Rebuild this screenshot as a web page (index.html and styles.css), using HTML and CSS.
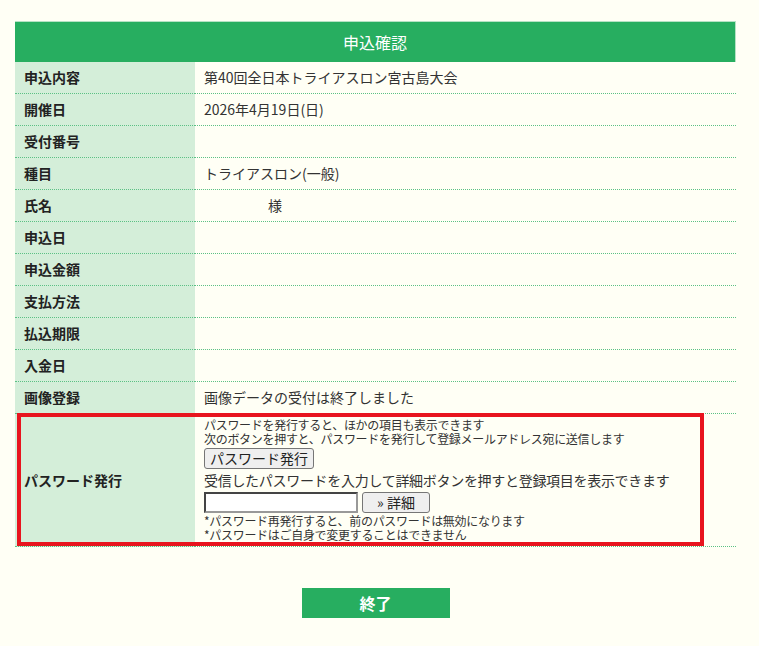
FILE: index.html
```html
<!DOCTYPE html>
<html lang="ja">
<head>
<meta charset="utf-8">
<title>申込確認</title>
<link rel="stylesheet" href="styles.css">
</head>
<body>
<div class="page">
  <table class="confirm">
    <colgroup><col class="col-label"><col class="col-value"></colgroup>
    <thead>
      <tr><th colspan="2" class="head">申込確認</th></tr>
    </thead>
    <tbody>
      <tr><th>申込内容</th><td>第40回全日本トライアスロン宮古島大会</td></tr>
      <tr><th>開催日</th><td>2026年4月19日(日)</td></tr>
      <tr><th>受付番号</th><td></td></tr>
      <tr><th>種目</th><td>トライアスロン(一般)</td></tr>
      <tr><th>氏名</th><td><span class="name">様</span></td></tr>
      <tr><th>申込日</th><td></td></tr>
      <tr><th>申込金額</th><td></td></tr>
      <tr><th>支払方法</th><td></td></tr>
      <tr><th>払込期限</th><td></td></tr>
      <tr><th>入金日</th><td></td></tr>
      <tr><th>画像登録</th><td>画像データの受付は終了しました</td></tr>
      <tr class="pw">
        <th>パスワード発行</th>
        <td>
          <div class="small">パスワードを発行すると、ほかの項目も表示できます</div>
          <div class="small">次のボタンを押すと、パスワードを発行して登録メールアドレス宛に送信します</div>
          <button class="btn issue" type="button">パスワード発行</button>
          <div class="mid">受信したパスワードを入力して詳細ボタンを押すと登録項目を表示できます</div>
          <div class="inrow"><input class="pwin" type="text"><button class="btn detail" type="button">» 詳細</button></div>
          <div class="small notes">*パスワード再発行すると、前のパスワードは無効になります</div>
          <div class="small">*パスワードはご自身で変更することはできません</div>
        </td>
      </tr>
    </tbody>
  </table>
  <div class="highlight"></div>
  <div class="actions"><button class="end" type="button">終了</button></div>
</div>
</body>
</html>
```
FILE: styles.css
```css
html, body {
  margin: 0;
  padding: 0;
  background: #fffff5;
}
body {
  font-family: "Noto Sans CJK JP", "Noto Sans", sans-serif;
  color: #333;
}
.page {
  position: relative;
  padding: 21px 0 0 15px;
  width: 721px;
}
.confirm {
  width: 721px;
  border-collapse: collapse;
  table-layout: fixed;
}
.col-label {
  width: 180px;
}
.confirm th.head {
  background: #27ae60;
  color: #fff;
  font-size: 16px;
  font-weight: normal;
  height: 40px;
  padding: 0;
  border-top: 1px solid #b6e2c4;
  border-right: 1px solid #b6e2c4;
  text-align: center;
  line-height: 38px;
}
.confirm tbody th,
.confirm tbody td {
  height: 31px;
  padding: 0 9px;
  font-size: 14px;
  line-height: 31px;
  border-bottom: 1px dotted #5cc185;
  text-align: left;
  vertical-align: middle;
  white-space: nowrap;
}
.confirm tbody th {
  background: #d4eed9;
  font-weight: bold;
  color: #222;
}
.confirm tbody td {
  background: #fffff5;
  color: #333;
}
.name {
  padding-left: 64px;
}
.confirm tbody .pw td {
  padding: 4px 9px 4px;
  line-height: 14px;
}
.small {
  font-size: 12px;
  line-height: 14px;
  color: #333;
  letter-spacing: -0.3px;
}
.notes {
  margin-top: 1px;
}
.mid {
  font-size: 14px;
  line-height: 19px;
  margin-top: 2px;
  letter-spacing: -0.3px;
}
.btn {
  font-family: "Noto Sans CJK JP", "Noto Sans", sans-serif;
  font-size: 14px;
  line-height: 17px;
  height: 21px;
  padding: 0 5px;
  color: #222;
  background: #efefef;
  border: 1px solid #767676;
  border-radius: 3px;
  box-sizing: border-box;
  white-space: nowrap;
}
.issue {
  display: block;
  margin-top: 2px;
}
.inrow {
  display: flex;
  gap: 4px;
  margin-top: 2px;
  height: 21px;
}
.pwin {
  width: 154px;
  height: 21px;
  box-sizing: border-box;
  border: 2px solid;
  border-color: #444 #999 #999 #444;
  background: #fff;
  padding: 0 2px;
  margin: 0;
}
.detail {
  width: 68px;
}
.highlight {
  position: absolute;
  left: 17px;
  top: 413px;
  width: 679px;
  height: 125px;
  border: 4px solid #e8141e;
}
.actions {
  display: flex;
  justify-content: center;
  padding-top: 41px;
}
.end {
  width: 148px;
  height: 30px;
  background: #27ae60;
  color: #fff;
  border: none;
  font-family: "Noto Sans CJK JP", "Noto Sans", sans-serif;
  font-size: 16px;
  font-weight: bold;
  padding: 0;
}
```
